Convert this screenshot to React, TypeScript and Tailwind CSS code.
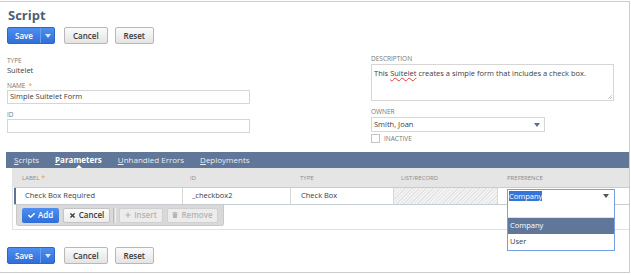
import React from 'react';
import { FaCheck, FaTimes, FaPlus, FaTrash } from 'react-icons/fa';

const Label = ({ children, req }: { children: React.ReactNode; req?: boolean }) => (
  <div className="h-[9px] text-[6.5px] leading-[9px] text-[#777] uppercase">
    {children}
    {req && <span className="ml-[3px] text-[#e9a23b]">*</span>}
  </div>
);

const Caret = ({ color }: { color: string }) => (
  <svg width="6" height="4" viewBox="0 0 6 4">
    <polygon points="0,0 6,0 3,4" fill={color} />
  </svg>
);

const GreyBtn = ({ label }: { label: string }) => (
  <div className="h-[17px] px-[8px] flex items-center rounded-[2px] border border-[#b8b8b8] bg-gradient-to-b from-[#fbfbfb] to-[#e4e4e4] text-[8px] font-semibold text-[#3a3a3a]">
    {label}
  </div>
);

const ButtonRow = () => (
  <div className="flex items-center ml-[7px]">
    <div className="h-[17px] w-[48px] flex rounded-[2px] bg-gradient-to-b from-[#4d8ff0] to-[#2f6fd8] border border-[#2b66c8]">
      <div className="w-[32px] flex items-center justify-center text-[8px] font-semibold text-white">Save</div>
      <div className="flex-1 flex items-center justify-center border-l border-[#6a9ff0]">
        <Caret color="#dce8fb" />
      </div>
    </div>
    <div className="ml-[9px]"><GreyBtn label="Cancel" /></div>
    <div className="ml-[7px]"><GreyBtn label="Reset" /></div>
  </div>
);

const Tab = ({ first, rest, active }: { first: string; rest: string; active?: boolean }) => (
  <span className={active ? 'font-bold text-white' : 'text-[#e9edf3]'}>
    <u>{first}</u>{rest}
  </span>
);

export default function App() {
  return (
    <div className="w-[631px] h-[275px] bg-white pt-px font-['Open_Sans',sans-serif] text-[#3d3d3d]">
      <div className="w-[630px] h-[272px] border-t border-r border-b border-[#cccccc] flex flex-col">
        {/* Header */}
        <h1 className="mt-[5px] ml-[8px] h-[16px] text-[13px] leading-[16px] font-bold text-[#4d5f79]">Script</h1>
        <div className="mt-[4px]"><ButtonRow /></div>

        {/* Main fields */}
        <div className="mt-[10px] flex items-start text-[7.5px]">
          <div className="ml-[7px] mt-[2px] w-[243px]">
            <Label>Type</Label>
            <div className="h-[10px] leading-[10px]">Suitelet</div>
            <div className="mt-[6px]"><Label req>Name</Label></div>
            <div className="h-[14px] border border-[#d6d6d6] flex items-center pl-[2px]">Simple Suitelet Form</div>
            <div className="mt-[6px]"><Label>ID</Label></div>
            <div className="h-[14px] border border-[#d6d6d6]" />
          </div>
          <div className="ml-[121px] w-[243px]">
            <Label>Description</Label>
            <div className="relative mt-px h-[37px] border border-[#d6d6d6] px-[2px] pt-[3px] leading-[10px]">
              This <span className="underline decoration-wavy decoration-[#e53935] decoration-[0.5px] underline-offset-[1px]">Suitelet</span> creates a simple form that includes a check box.
              <svg className="absolute right-px bottom-px" width="4" height="4" viewBox="0 0 4 4">
                <path d="M4 0 L0 4 M4 2 L2 4" stroke="#aaa" strokeWidth="0.6" />
              </svg>
            </div>
            <div className="mt-[6px]"><Label>Owner</Label></div>
            <div className="mt-px h-[15px] w-[174px] border border-[#d6d6d6] flex items-center justify-between pl-[2px] pr-[4px]">
              <span>Smith, Joan</span>
              <Caret color="#5a6e8c" />
            </div>
            <div className="mt-[2px] flex items-end">
              <div className="w-[9px] h-[9px] border border-[#c4c4c4] bg-white" />
              <span className="ml-[4px] text-[6.5px] leading-[8px] text-[#777]">INACTIVE</span>
            </div>
          </div>
        </div>

        {/* Sublist tabs */}
        <div className="relative mt-[9px] ml-[6px] h-[16px] bg-[#607799] flex items-center pl-[8px] gap-[16px] text-[8px] leading-[16px]">
          <Tab first="S" rest="cripts" />
          <Tab first="P" rest="arameters" active />
          <Tab first="U" rest="nhandled Errors" />
          <Tab first="D" rest="eployments" />
          <div className="absolute left-[70px] bottom-0 w-0 h-0 border-l-[3px] border-r-[3px] border-b-[3px] border-l-transparent border-r-transparent border-b-white" />
        </div>

        <div className="ml-[12px] border-l border-b border-[#e2e2e2] pb-[3px]">
          <div className="h-[19px] bg-[#e5e5e5] flex items-center pt-[2px] text-[6px] text-[#8a8a8a] uppercase">
            <div className="w-[169px] pl-[9px]">Label<span className="ml-[2px] text-[#e9a23b] text-[7px]">*</span></div>
            <div className="w-[108px] pl-[8px]">ID</div>
            <div className="w-[103px] pl-[10px]">Type</div>
            <div className="w-[104px] pl-[8px]">List/Record</div>
            <div className="pl-[10px]">Preference</div>
          </div>
          <div className="ml-px h-[18px] flex border-y border-[#c7ccd4] text-[7.5px]">
            <div className="w-[168px] border-l-2 border-[#5f7494] flex items-center pl-[9px]">Check Box Required</div>
            <div className="w-[108px] border-l border-[#d8d8d8] flex items-center pl-[9px]">_checkbox2</div>
            <div className="w-[103px] border-l border-[#d8d8d8] flex items-center pl-[10px]">Check Box</div>
            <div className="w-[104px] border-l border-[#d8d8d8] bg-[image:repeating-linear-gradient(135deg,#e4e4e4_0px,#e4e4e4_1px,#f3f3f3_1px,#f3f3f3_2.5px)]" />
            <div className="flex-1 border-l border-[#d8d8d8] flex items-center pl-[9px]">
              <div className="relative w-[108px] h-[14px] border border-[#78a0e6] flex items-center justify-between pl-px pr-[5px] bg-white">
                <span className="bg-[#3574d8] text-white leading-[10px]">Company</span>
                <Caret color="#555" />
                <div className="absolute -left-px top-full w-[108px] border border-t-0 border-[#78a0e6] bg-white z-10">
                  <div className="h-[16px] border-b border-[#e0e0e0]" />
                  <div className="h-[16px] bg-[#607799] text-white flex items-center pl-[2px]">Company</div>
                  <div className="h-[16px] flex items-center pl-[2px]">User</div>
                </div>
              </div>
            </div>
          </div>
          <div className="ml-[3px] w-[208px] h-[21px] bg-[#d9d9d9] border border-t-0 border-[#c9c9c9] rounded-b-[3px] flex items-center pl-[5px] text-[8px] font-semibold">
            <div className="h-[15px] w-[37px] flex items-center justify-center gap-[3px] rounded-[2px] bg-gradient-to-b from-[#4d8ff0] to-[#2f6fd8] text-white">
              <FaCheck size={7} />Add
            </div>
            <div className="ml-[4px] h-[15px] w-[47px] flex items-center justify-center gap-[3px] rounded-[2px] border border-[#c4c4c4] bg-gradient-to-b from-[#fcfcfc] to-[#ececec] text-[#3a3a3a]">
              <FaTimes size={7} />Cancel
            </div>
            <div className="ml-[3px] h-[15px] w-px bg-[#bdbdbd]" />
            <div className="ml-px h-[15px] w-px bg-[#f2f2f2]" />
            <div className="ml-[3px] h-[15px] w-[44px] flex items-center justify-center gap-[3px] rounded-[2px] border border-[#d0d0d0] bg-[#ececec] text-[#b4b4b4]">
              <FaPlus size={6} />Insert
            </div>
            <div className="ml-[4px] h-[15px] w-[51px] flex items-center justify-center gap-[3px] rounded-[2px] border border-[#d0d0d0] bg-[#ececec] text-[#b4b4b4]">
              <FaTrash size={6} />Remove
            </div>
          </div>
        </div>

        <div className="mt-[17px]"><ButtonRow /></div>
      </div>
    </div>
  );
}
